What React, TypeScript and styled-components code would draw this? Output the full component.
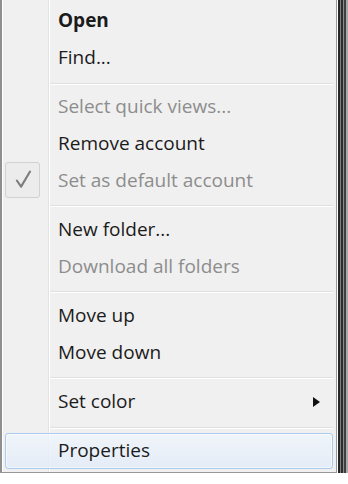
import React from "react";
import styled, { createGlobalStyle } from "styled-components";

interface Entry {
	label?: string,
	bold?: boolean,
	disabled?: boolean,
	checked?: boolean,
	submenu?: boolean,
	active?: boolean,
	separator?: boolean
}

const entries: Entry[] = [
	{ label: "Open", bold: true },
	{ label: "Find..." },
	{ separator: true },
	{ label: "Select quick views...", disabled: true },
	{ label: "Remove account" },
	{ label: "Set as default account", disabled: true, checked: true },
	{ separator: true },
	{ label: "New folder..." },
	{ label: "Download all folders", disabled: true },
	{ separator: true },
	{ label: "Move up" },
	{ label: "Move down" },
	{ separator: true },
	{ label: "Set color", submenu: true },
	{ separator: true },
	{ label: "Properties", active: true },
];

const GlobalStyle = createGlobalStyle`
	html, body {
		margin: 0;
		padding: 0;
		background: #ffffff;
	}
`;

const CheckMark = () => (
	<svg width="35" height="37" viewBox="0 0 35 37">
		<path d="M11.5 18.5 L16 25 L25.5 9" fill="none" stroke="#7c7c7c" strokeWidth="2.2" strokeLinecap="round" strokeLinejoin="round" />
	</svg>
);

const App = () => {
	return (
		<>
			<GlobalStyle />
			<Menu>
				{entries.map((e, i) =>
					e.separator ? (
						<Separator key={i} />
					) : (
						<Item key={i} $active={e.active}>
							<Gutter>{e.checked && <CheckBox><CheckMark /></CheckBox>}</Gutter>
							<Label $bold={e.bold} $disabled={e.disabled}>{e.label}</Label>
							{e.submenu && <Arrow />}
						</Item>
					)
				)}
			</Menu>
		</>
	);
};

export default App;

// stepped drop shadow: each band is offset and spread by half its reach,
// so it grows to the right and down only
const Menu = styled.div`
	width: 337px;
	box-sizing: border-box;
	padding: 2.7px 3px 3px 3px;
	border-left: 2px solid #8f8f8f;
	border-right: 1px solid #979797;
	border-bottom: 1px solid #979797;
	background:
		linear-gradient(to right, transparent 46px, #e2e3e3 46px, #e2e3e3 47px, #ffffff 47px, #ffffff 48px, transparent 48px),
		#f0f0f0;
	box-shadow:
		inset 1px 0 0 #ffffff,
		0.5px 0.5px 0 0.5px #ffffff,
		1.5px 1.5px 0 1.5px #262626,
		2px 2px 0 2px #7e7e7e,
		3px 3px 0 3px #2e2e2e,
		3.5px 3.5px 0 3.5px #8c8c8c,
		4.5px 4.5px 0 4.5px #404040,
		5.5px 5.5px 0 5.5px #a8a8a8;
	font-family: "Open Sans", "Noto Sans", sans-serif;
	font-size: 19px;
`;

const Item = styled.div<{ $active?: boolean }>`
	height: 36.6px;
	box-sizing: border-box;
	display: flex;
	align-items: center;
	border-radius: 3px;
	border: 1px solid ${(p) => (p.$active ? "#a9cbef" : "transparent")};
	background: ${(p) =>
		p.$active ? "linear-gradient(to bottom, rgba(240,245,252,0.85), rgba(226,235,247,0.85))" : "transparent"};
	box-shadow: ${(p) => (p.$active ? "inset 0 0 0 1px rgba(255,255,255,0.55)" : "none")};
`;

const Gutter = styled.div`
	width: 52px;
	height: 100%;
	flex-shrink: 0;
	display: flex;
	align-items: center;
`;

const CheckBox = styled.div`
	width: 35px;
	height: 36.6px;
	margin-left: -1px;
	box-sizing: border-box;
	border: 1px solid #d2d2d2;
	border-radius: 3px;
	background: #ececec;
	display: flex;
	align-items: center;
	justify-content: center;

	svg {
		display: block;
	}
`;

const Label = styled.span<{ $bold?: boolean, $disabled?: boolean }>`
	flex: 1;
	font-weight: ${(p) => (p.$bold ? 700 : 400)};
	color: ${(p) => (p.$disabled ? "#8d8d8d" : "#1b1b1b")};
	white-space: nowrap;
	line-height: 1;
`;

const Arrow = styled.span`
	width: 0;
	height: 0;
	border-top: 5.5px solid transparent;
	border-bottom: 5.5px solid transparent;
	border-left: 7px solid #111111;
	margin-right: 12px;
`;

const Separator = styled.div`
	height: 1px;
	margin: 7px 0 3.8px 45px;
	background: #e0e0e0;
	border-bottom: 1px solid #ffffff;
`;
